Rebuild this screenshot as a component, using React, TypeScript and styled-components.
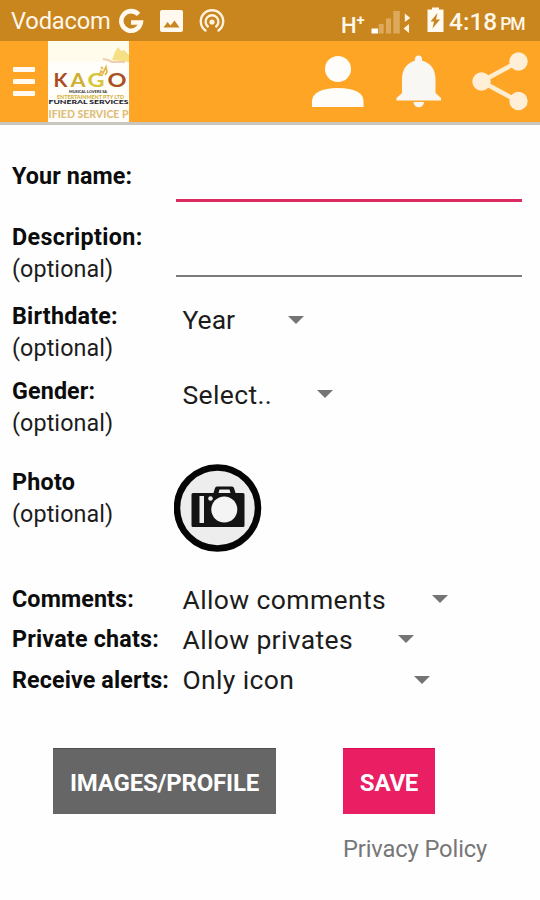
import React from "react";
import styled, { createGlobalStyle } from "styled-components";

const GlobalStyle = createGlobalStyle`
  * { box-sizing: border-box; }
  body { margin: 0; background: #fefefe; font-family: Roboto, "Liberation Sans", sans-serif; color: #111; }
`;

const Screen = styled.main`
  width: 540px;
  height: 900px;
  overflow: hidden;
  background: #fefefe;
`;

const StatusBar = styled.header`
  display: flex;
  align-items: center;
  height: 41px;
  padding-left: 11px;
  background: #c9851e;
  color: #fff7ea;
`;

const Carrier = styled.span`
  width: 107px;
  font-size: 23.7px;
  line-height: 41px;
  letter-spacing: -0.2px;
  white-space: nowrap;
  padding-top: 2px;
`;

const StatusIcons = styled.svg`
  flex: none;
  display: block;
`;

const Network = styled.span`
  display: flex;
  margin-left: 115px;
  width: 27px;
  padding-top: 11px;
  font-size: 22px;
  line-height: 32px;
  font-weight: 500;
`;

const Plus = styled.sup`
  font-size: 15px;
  line-height: 20px;
  font-weight: 700;
`;

const Clock = styled.span`
  margin-left: 5px;
  padding-top: 2px;
  font-size: 24.5px;
  font-weight: 500;
  white-space: nowrap;
`;

const Meridiem = styled.small`
  margin-left: 3px;
  font-size: 17.5px;
  letter-spacing: -1.2px;
`;

const AppBar = styled.nav`
  display: flex;
  height: 84px;
  background: #fea526;
  border-bottom: 3px solid #c9c6c0;
`;

const MenuButton = styled.button`
  display: flex;
  flex-direction: column;
  gap: 7px;
  width: 48px;
  padding: 26px 0 0 13px;
  border: 0;
  background: none;
`;

const MenuBar = styled.span`
  width: 22px;
  height: 5px;
  background: #fffaf0;
  border-radius: 1px;
`;

const Logo = styled.svg`
  display: block;
  flex: none;
`;

const Actions = styled.svg`
  display: block;
  margin-left: auto;
`;

const Form = styled.form`
  display: flex;
  flex-direction: column;
  padding: 34px 18px 0 12px;
`;

const Row = styled.div<{ $h: number }>`
  display: grid;
  grid-template-columns: 164px 1fr;
  height: ${(p) => p.$h}px;
`;

const Label = styled.label<{ $track?: number; $line?: number; $top?: number }>`
  margin-top: ${(p) => p.$top ?? 0.8}px;
  font-size: 23.3px;
  line-height: ${(p) => p.$line ?? 32.4}px;
  font-weight: 700;
  letter-spacing: ${(p) => p.$track ?? 0.12}px;
  white-space: nowrap;
  color: #0c0c0c;
`;

const Optional = styled.span`
  display: block;
  font-weight: 400;
  letter-spacing: 0.1px;
  color: #1c1c1c;
`;

const TextInput = styled.input<{ $h: number; $active?: boolean }>`
  width: 346px;
  height: ${(p) => p.$h}px;
  padding: 0 6px;
  border: 0;
  border-bottom: ${(p) => (p.$active ? "3px solid #dc2c62" : "2px solid #7b7b7b")};
  background: transparent;
  font: 26px Roboto, sans-serif;
  outline: none;
`;

const Spinner = styled.div<{ $w: number; $track?: number }>`
  display: flex;
  align-items: center;
  justify-content: space-between;
  width: ${(p) => p.$w}px;
  height: 40px;
  margin: 0 0 0 6.5px;
  font-size: 26.5px;
  letter-spacing: ${(p) => p.$track ?? 0}px;
  white-space: nowrap;
  color: #1c1c1c;
`;

const Arrow = styled.span`
  width: 0;
  height: 0;
  border: solid transparent;
  border-width: 8px 8px 0;
  border-top-color: #747474;
`;

const PhotoButton = styled.button`
  width: 88px;
  height: 88px;
  margin: -1px 0 0 -2px;
  padding: 0;
  border: 0;
  background: none;
`;

const ButtonBar = styled.div`
  display: flex;
  gap: 67px;
  padding: 48px 0 0 41px;
`;

const Button = styled.button<{ $w: number; $bg: string; $edge: string }>`
  width: ${(p) => p.$w}px;
  height: 66px;
  padding: 3px 0 0;
  border: 0;
  border-top: 1px solid ${(p) => p.$edge};
  background: ${(p) => p.$bg};
  color: #fff;
  font: 700 24px Roboto, sans-serif;
  letter-spacing: -0.2px;
  white-space: nowrap;
`;

const Policy = styled.a`
  margin: 19px 0 0 331px;
  font-size: 23.7px;
  line-height: 33px;
  letter-spacing: -0.12px;
  white-space: nowrap;
  color: #777;
`;

function NotificationIcons() {
  return (
    <StatusIcons width="108" height="41" viewBox="118 0 108 41">
      <path d="M138.500 14.500A9.800 9.800 0 1 0 140.800 22.500H131" fill="none" stroke="#fff9ef" strokeWidth="4.600" />
      <path fillRule="evenodd" fill="#fff9ef" d="M162 10h19q2 0 2 2v18q0 2-2 2h-19q-2 0-2-2V12q0-2 2-2zM163.500 27.500h16l-5-7-4 5-3-3.500z" />
      <g fill="none" stroke="#fff3de" strokeWidth="2.400" strokeLinecap="round">
        <path d="M205.500 30.500A11.200 11.200 0 1 1 218.500 30.500" />
        <path d="M207.800 26.500A6.400 6.400 0 1 1 216.200 26.500" />
      </g>
      <circle cx="212" cy="22" r="2.600" fill="#fff3de" />
    </StatusIcons>
  );
}

function SignalIcons() {
  return (
    <StatusIcons width="76" height="41" viewBox="368 0 76 41">
      <path fill="#fff" d="M371.500 28.500h6.500v5h-6.500z" />
      <g fill="#dda95b">
        <path d="M378.700 24h5v9.500h-5zM386 18.500h5v15h-5zM393.300 11h6.500v22.500h-6.500z" />
      </g>
      <path fill="#fff4e0" d="M404.800 13.500l5.500 4.500-5.500 4zM409 24v9l-5.500-4.500z" />
      <path fillRule="evenodd" fill="#fffaf2" d="M427.500 9.500h4.500v-2h7v2h4.500V32h-16zM437.500 13l-7 8.500h3.500l-1.500 7 7.500-9h-4z" />
    </StatusIcons>
  );
}

function BrandLogo() {
  return (
    <Logo width="81" height="81" viewBox="48 41 81 81" fontFamily="Lato, sans-serif">
      <path fill="#fffcec" d="M48 41h81v81H48z" />
      <path fill="#fffefa" d="M48 62h81v60H48z" />
      <path fill="#f6df85" d="M112 60l3-8 3-5 3 4 3-1 5 5v7l-9-1z" />
      <path d="M103 59l5 1 4 2h13" stroke="#efcfb0" strokeWidth="2" fill="none" />
      <g fontSize="18.500" fontWeight="700">
        <text x="53.500" y="87" fill="#ad4b24" textLength="14" lengthAdjust="spacingAndGlyphs">K</text>
        <text x="70.500" y="87" fill="#cfae32" textLength="15" lengthAdjust="spacingAndGlyphs">A</text>
        <text x="87.500" y="87" fill="#d8c537" textLength="17" lengthAdjust="spacingAndGlyphs">G</text>
        <text x="107.500" y="87" fill="#a9501e" textLength="19" lengthAdjust="spacingAndGlyphs">O</text>
      </g>
      <path d="M99 76l2-5 2 2 3-6 1 5-2 3M101 67l2 2" fill="none" stroke="#e4b953" strokeWidth="1.800" />
      <g fontWeight="900">
        <text x="69" y="92.700" fontSize="4.200" fill="#343434" textLength="38" lengthAdjust="spacingAndGlyphs">MUSICAL LOVERS SA</text>
        <text x="57" y="98.700" fontSize="4.600" fill="#d0b33d" textLength="67" lengthAdjust="spacingAndGlyphs">ENTERTAINMENT PTY LTD</text>
        <text x="48.500" y="104.300" fontSize="5.300" fill="#20222b" textLength="80" lengthAdjust="spacingAndGlyphs">FUNERAL SERVICES</text>
        <text x="48.500" y="118" fontSize="10.500" fill="#dec07c" textLength="80" lengthAdjust="spacingAndGlyphs">IFIED SERVICE P</text>
      </g>
    </Logo>
  );
}

function ActionIcons() {
  return (
    <Actions width="240" height="81" viewBox="300 41 240 81">
      <g fill="#fffdf9">
        <circle cx="338" cy="69" r="13" />
        <path d="M312 107v-6q1-12.500 26-13 25 .5 25.500 13v6z" />
      </g>
      <g fill="#f9f7f3">
        <path d="M415 60.500v-1.500a3.500 3.500 0 0 1 7 0v1.500C431 63 435.500 70 435.500 79v14l5.500 5v2.500h-44.500V98l5.500-5V79c0-9 4.500-16 13-18.500z" />
        <path d="M413.500 102h10.500a5.200 5.200 0 0 1-10.500 0z" />
      </g>
      <path d="M518.500 61.500L481.500 81.500l37 20" fill="none" stroke="#ffedcf" strokeWidth="4.500" />
      <g fill="#ffefd7">
        <circle cx="518.500" cy="61.500" r="9.200" />
        <circle cx="481.500" cy="81.500" r="9.200" />
        <circle cx="518.500" cy="101" r="9.200" />
      </g>
    </Actions>
  );
}

function CameraIcon() {
  return (
    <svg width="88" height="88" viewBox="0 0 88 88">
      <circle cx="43.500" cy="44" r="40.500" fill="#ededed" stroke="#050505" strokeWidth="6.500" />
      <path fillRule="evenodd" fill="#141414" d="M19 29h20.500l1.500-5q.5-1.500 2-1.500h15q1.500 0 2 1.500l1.500 5H69q1.500 0 1.500 1.500v31q0 1.500-1.500 1.500H19q-1.500 0-1.500-1.500v-31Q17.500 29 19 29zM45.500 25.500l-1 3.500h12l-1-3.500z" />
      <path fill="#eee" d="M25.500 32h4.500v27h-4.500z" />
      <circle cx="36.500" cy="34.500" r="2.300" fill="#eee" />
      <circle cx="50.300" cy="45.500" r="13" fill="#f4f4f4" />
    </svg>
  );
}

export default function App() {
  return (
    <Screen>
      <GlobalStyle />
      <StatusBar>
        <Carrier>Vodacom</Carrier>
        <NotificationIcons />
        <Network>H<Plus>+</Plus></Network>
        <SignalIcons />
        <Clock>4:18<Meridiem>PM</Meridiem></Clock>
      </StatusBar>
      <AppBar>
        <MenuButton type="button" aria-label="Menu">
          <MenuBar /><MenuBar /><MenuBar />
        </MenuButton>
        <BrandLogo />
        <ActionIcons />
      </AppBar>
      <Form>
        <Row $h={61}>
          <Label>Your name:</Label>
          <TextInput $h={42.5} $active aria-label="Your name" />
        </Row>
        <Row $h={79.5}>
          <Label $track={0.35} $top={0.5}>Description:<Optional>(optional)</Optional></Label>
          <TextInput $h={57} aria-label="Description" />
        </Row>
        <Row $h={74.5}>
          <Label $track={0.22} $top={0.3}>Birthdate:<Optional>(optional)</Optional></Label>
          <Spinner $w={121.5}>Year<Arrow /></Spinner>
        </Row>
        <Row $h={91}>
          <Label $top={0.6}>Gender:<Optional>(optional)</Optional></Label>
          <Spinner $w={150.5} $track={0.35}>Select..<Arrow /></Spinner>
        </Row>
        <Row $h={114}>
          <Label $track={0.25} $top={0.6}>Photo<Optional>(optional)</Optional></Label>
          <PhotoButton type="button" aria-label="Photo"><CameraIcon /></PhotoButton>
        </Row>
        <Row $h={40.3}>
          <Label $line={40} $top={0}>Comments:</Label>
          <Spinner $w={265} $track={0.38}>Allow comments<Arrow /></Spinner>
        </Row>
        <Row $h={40.3}>
          <Label $line={40} $top={0} $track={0.2}>Private chats:</Label>
          <Spinner $w={231.5} $track={0.35}>Allow privates<Arrow /></Spinner>
        </Row>
        <Row $h={40.3}>
          <Label $line={40} $top={0}>Receive alerts:</Label>
          <Spinner $w={247} $track={0.35}>Only icon<Arrow /></Spinner>
        </Row>
        <ButtonBar>
          <Button type="button" $w={223} $bg="#666" $edge="#4d4d4d">IMAGES/PROFILE</Button>
          <Button type="button" $w={92} $bg="#e91e63" $edge="#d80b51">SAVE</Button>
        </ButtonBar>
        <Policy>Privacy Policy</Policy>
      </Form>
    </Screen>
  );
}
